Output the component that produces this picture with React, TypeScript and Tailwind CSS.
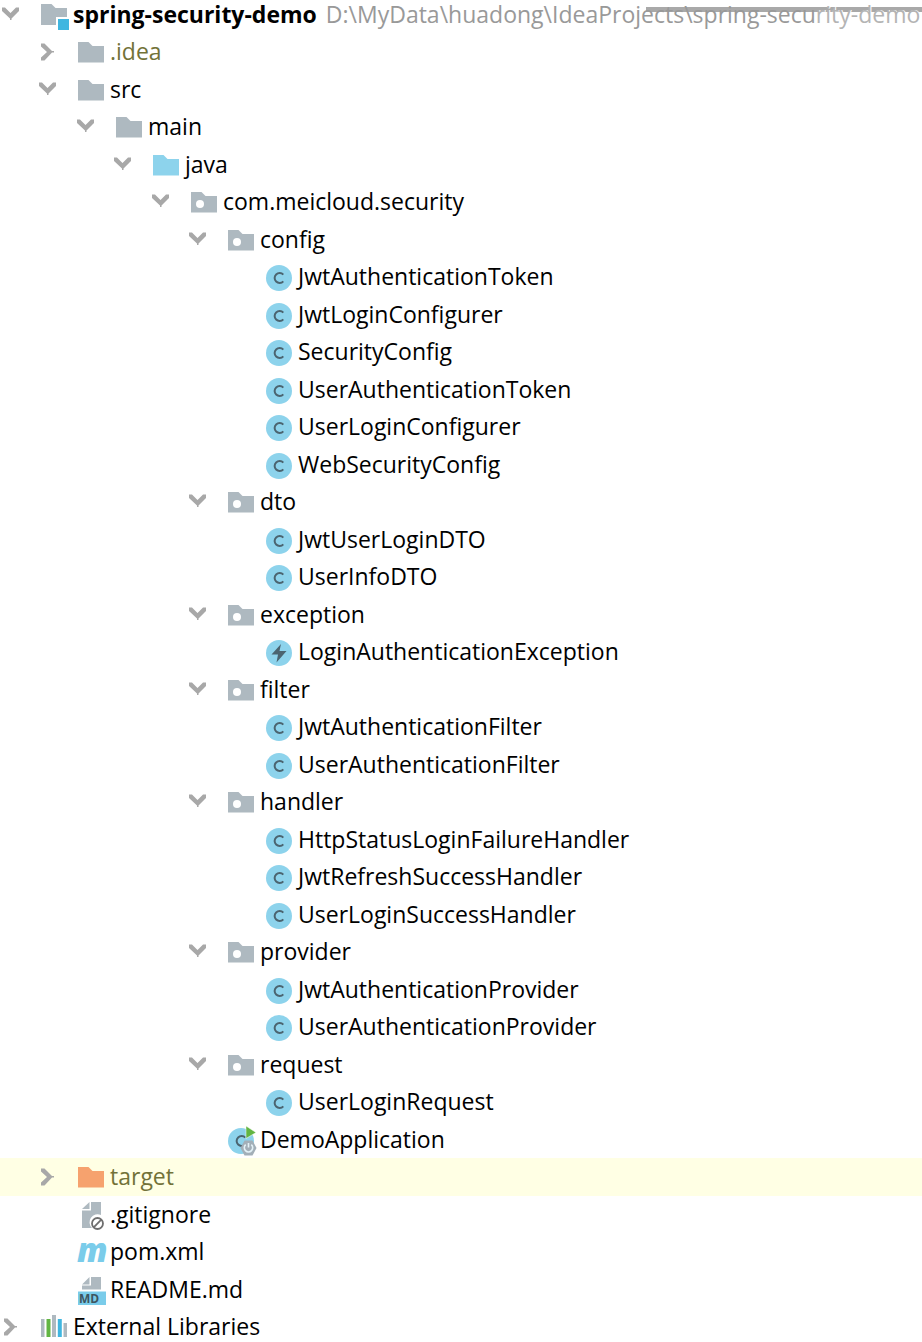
import type { ReactNode } from 'react'

type IconKind =
  | 'module'
  | 'folder'
  | 'source'
  | 'package'
  | 'excluded'
  | 'class'
  | 'exception'
  | 'application'
  | 'ignored'
  | 'maven'
  | 'markdown'
  | 'libraries'

interface TreeNode {
  name: string
  icon: IconKind
  level: number
  state?: 'open' | 'closed'
  tone?: 'olive' | 'bold'
  path?: [string, string]
  highlighted?: boolean
}

const classes = (...names: string[]): TreeNode[] =>
  names.map((name) => ({ name, icon: 'class', level: 6 }))

const pkg = (name: string, level = 5): TreeNode => ({ name, icon: 'package', level, state: 'open' })

const nodes: TreeNode[] = [
  {
    name: 'spring-security-demo',
    icon: 'module',
    level: 0,
    state: 'open',
    tone: 'bold',
    // the second part is drawn faded
    path: ['D:\\MyData\\huadong\\IdeaProjects\\spring-secu', 'rity-demo'],
  },
  { name: '.idea', icon: 'folder', level: 1, state: 'closed', tone: 'olive' },
  { name: 'src', icon: 'folder', level: 1, state: 'open' },
  { name: 'main', icon: 'folder', level: 2, state: 'open' },
  { name: 'java', icon: 'source', level: 3, state: 'open' },
  pkg('com.meicloud.security', 4),
  pkg('config'),
  ...classes(
    'JwtAuthenticationToken',
    'JwtLoginConfigurer',
    'SecurityConfig',
    'UserAuthenticationToken',
    'UserLoginConfigurer',
    'WebSecurityConfig'
  ),
  pkg('dto'),
  ...classes('JwtUserLoginDTO', 'UserInfoDTO'),
  pkg('exception'),
  { name: 'LoginAuthenticationException', icon: 'exception', level: 6 },
  pkg('filter'),
  ...classes('JwtAuthenticationFilter', 'UserAuthenticationFilter'),
  pkg('handler'),
  ...classes('HttpStatusLoginFailureHandler', 'JwtRefreshSuccessHandler', 'UserLoginSuccessHandler'),
  pkg('provider'),
  ...classes('JwtAuthenticationProvider', 'UserAuthenticationProvider'),
  pkg('request'),
  ...classes('UserLoginRequest'),
  { name: 'DemoApplication', icon: 'application', level: 5 },
  { name: 'target', icon: 'excluded', level: 1, state: 'closed', tone: 'olive', highlighted: true },
  { name: '.gitignore', icon: 'ignored', level: 1 },
  { name: 'pom.xml', icon: 'maven', level: 1 },
  { name: 'README.md', icon: 'markdown', level: 1 },
  { name: 'External Libraries', icon: 'libraries', level: 0, state: 'closed' },
]

const indents = ['pl-0', 'pl-[37px]', 'pl-[75px]', 'pl-[112px]', 'pl-[150px]', 'pl-[187px]', 'pl-[225px]']

const folderPath = 'M1 5h10.500l4 4H27v16.500H1z'

function ClassDisc() {
  return (
    <>
      <circle cx="14" cy="16" r="13" fill="#8dd3ec" />
      <path d="M18.300 12.600a5 5 0 1 0 0 6.800" fill="none" stroke="#4b6470" strokeWidth="2" />
    </>
  )
}

const drawings: Record<IconKind, ReactNode> = {
  module: (
    <>
      <path d="M1 4h10.500l4 4H27v9H16v8H1z" fill="#aeb9c0" />
      <path d="M18 19h11v11H18z" fill="#40b6e0" />
    </>
  ),
  folder: <path d={folderPath} fill="#aeb9c0" />,
  source: <path d={folderPath} fill="#8dd3ec" />,
  excluded: <path d={folderPath} fill="#f6a26e" />,
  package: (
    <>
      <path d={folderPath} fill="#aeb9c0" />
      <circle cx="10" cy="17" r="4" fill="#fff" />
    </>
  ),
  class: <ClassDisc />,
  exception: (
    <>
      <circle cx="14" cy="16" r="13" fill="#8dd3ec" />
      <path d="M16 7 6.500 17.500h6.500L11.500 25.500 21.500 14H14.500z" fill="#4b6470" />
    </>
  ),
  application: (
    <>
      <ClassDisc />
      <path d="M19 1l10 6.500-10 6z" fill="#62b543" stroke="#fff" strokeWidth="0.500" />
      <path d="M17.500 15.500h8l4 7.500-4 7.500h-8l-4-7.500z" fill="#a3afb8" />
      <path d="M18.700 19.600a4.200 4.200 0 1 0 5.600 0M21.500 18v4.500" fill="none" stroke="#e3f1f7" strokeWidth="1.600" />
    </>
  ),
  ignored: (
    <>
      <path d="M14 2h10v13a8 8 0 0 0-9 13H5V10.500h9z" fill="#aeb9c0" />
      <path d="M5 9 12.500 2v7z" fill="#aeb9c0" />
      <circle cx="20.500" cy="23.500" r="5.500" fill="#fff" stroke="#6e6e6e" strokeWidth="1.800" />
      <path d="m16.700 27.300 7.600-7.600" stroke="#6e6e6e" strokeWidth="1.800" />
    </>
  ),
  maven: (
    <text x="0" y="25" fontSize="33" fontWeight="900" fontStyle="italic" className="font-['Open_Sans',sans-serif]" fill="#7accea">
      m
    </text>
  ),
  markdown: (
    <>
      <path d="M14 2h10v12.500H5v-4h9z" fill="#aeb9c0" />
      <path d="M5 9.500 12.500 2v7.500z" fill="#aeb9c0" />
      <path d="M1 16.500h28v13.500H1z" fill="#7accea" />
      <text x="2" y="28" fontSize="12" fontWeight="700" className="font-['Open_Sans',sans-serif]" fill="#3e5560">
        MD
      </text>
    </>
  ),
  libraries: (
    <>
      <path d="M1 7h3.500v18H1zM12 3h4v22h-4zM23.500 11H27v14h-3.500z" fill="#aeb9c0" />
      <path d="M6.500 7h4v18h-4z" fill="#62b543" />
      <path d="M17.800 7h4v18h-4z" fill="#40b6e0" />
    </>
  ),
}

function NodeIcon({ kind }: { kind: IconKind }) {
  return (
    <svg viewBox="0 0 30 30" className="h-[30px] w-[30px] shrink-0 overflow-visible" aria-hidden="true">
      {drawings[kind]}
    </svg>
  )
}

function Chevron({ state, name }: { state: 'open' | 'closed'; name: string }) {
  return (
    <button type="button" aria-label={`${state === 'open' ? 'Collapse' : 'Expand'} ${name}`} className="h-5 w-5 shrink-0">
      <svg viewBox="0 0 20 20" className="h-5 w-5" fill="#a8a8a8">
        <path
          d={
            state === 'open'
              ? 'M2 2.500h3l5.500 5.500L16 2.500h3V6l-7.500 7.500v1.500h-1.500v-1.500L2 6z'
              : 'M4 1.500h3.500L15 9h2v1.500h-2L7.500 18.500H4v-3L10 10 4 4.500z'
          }
        />
      </svg>
    </button>
  )
}

function TreeRow({ node }: { node: TreeNode }) {
  const color = node.tone === 'olive' ? 'text-[#727238]' : 'text-black'
  return (
    <li
      role="treeitem"
      aria-level={node.level + 1}
      aria-expanded={node.state ? node.state === 'open' : undefined}
      className={`flex items-center odd:h-[37px] even:h-[38px] even:pb-px ${node.highlighted ? 'bg-[#ffffe4]' : ''}`}
    >
      <div className={`flex items-center whitespace-nowrap ${indents[node.level]}`}>
        <span className="mr-5 flex w-5 shrink-0">
          {node.state && <Chevron state={node.state} name={node.name} />}
        </span>
        <NodeIcon kind={node.icon} />
        <span className={`ml-[3px] pb-px ${color} ${node.tone === 'bold' ? 'font-bold' : ''}`}>{node.name}</span>
        {node.path && (
          <span className="ml-[9px] pb-px text-[#999999]">
            {node.path[0]}
            <span className="text-[#b4b4b4] [text-shadow:1px_0_0_#fff]">{node.path[1]}</span>
          </span>
        )}
      </div>
    </li>
  )
}

export default function App() {
  return (
    <main className="relative isolate h-screen overflow-hidden bg-white font-['Open_Sans','Noto_Sans',sans-serif] text-[23px] leading-8">
      <ul role="tree" aria-label="Project" className="-mt-1">
        {nodes.map((node) => (
          <TreeRow key={node.name} node={node} />
        ))}
      </ul>
      <div className="absolute top-[7px] right-0 -z-10 h-[5px] w-[276px] bg-[#a9a9a9]" />
    </main>
  )
}
